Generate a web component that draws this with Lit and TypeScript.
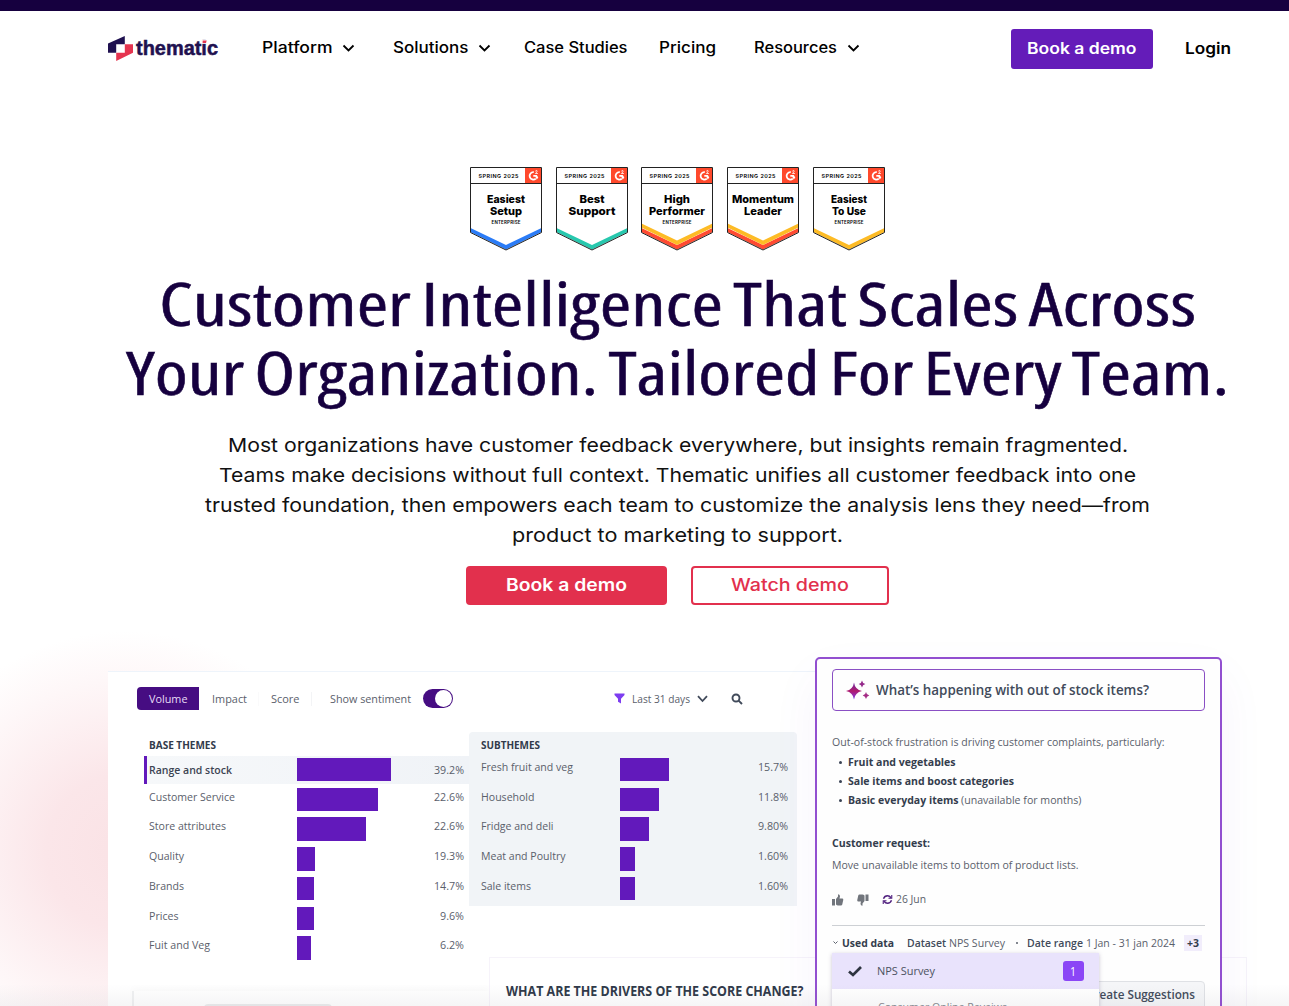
import { LitElement, html, svg, css, nothing } from "lit";
import { customElement, property } from "lit/decorators.js";

// one line of text set to an exact measure, caps centred in the box
@customElement("fit-text")
export class FitText extends LitElement {
  static styles = css`
    :host {
      display: block;
      flex: none;
    }

    svg {
      display: block;
      height: 1.28em;
      overflow: visible;
    }

    text {
      fill: currentColor;
      white-space: pre;
    }
  `;

  @property() text = "";
  @property({ type: Number }) w = 0;

  render() {
    return html`<svg width=${this.w}>
      <text x="0" y="1em" textLength=${this.w} lengthAdjust="spacingAndGlyphs">${this.text}</text>
    </svg>`;
  }
}

const fit = (text: string, w: number, cls = "") =>
  html`<fit-text class=${cls} .text=${text} .w=${w}></fit-text>`;

interface Badge {
  lines: [string, number][];
  small?: boolean;
  size: number;
  colors: string[];
}

const badges: Badge[] = [
  { lines: [["Easiest", 38], ["Setup", 32]], small: true, size: 11, colors: ["#2b7cf7"] },
  { lines: [["Best", 25], ["Support", 47]], size: 11, colors: ["#27c8ae"] },
  { lines: [["High", 26], ["Performer", 56]], small: true, size: 11, colors: ["#ff4a31", "#fdbb25"] },
  { lines: [["Momentum", 62], ["Leader", 38]], size: 11, colors: ["#ff4a31", "#fdbb25"] },
  { lines: [["Easiest", 36], ["To Use", 34]], small: true, size: 10.4, colors: ["#fdbb25"] },
];

@customElement("award-badge")
export class AwardBadge extends LitElement {
  static styles = css`
    :host {
      display: block;
    }

    svg {
      display: block;
      overflow: visible;
    }

    text {
      font-family: Inter, sans-serif;
      text-anchor: middle;
      fill: #000;
    }

    .season {
      font-size: 5.4px;
      font-weight: 600;
    }

    .title {
      font-weight: 800;
    }

    .tier {
      font-size: 4.4px;
      font-weight: 600;
    }
  `;

  @property({ attribute: false }) badge!: Badge;

  render() {
    const b = this.badge;
    return html`<svg width="72" height="85" viewBox="0 0 72 85">
      <path d="M.5 .5H71.5V65.5L36 83 .5 65.5Z" fill="#fff" />
      ${b.colors.map((c, i) => {
        const y = 65 - i * 4.5;
        return svg`<path d=${`M.5 ${y - 4}L36 ${y + 13}L71.5 ${y - 4}V${y}L36 ${y + 17.5}L.5 ${y}Z`} fill=${c} />`;
      })}
      <path d="M.5 .5H71.5V65.5L36 83 .5 65.5Z" fill="none" stroke="#222" />
      <path d="M.5 16.5H71.5" stroke="#222" />
      <rect x="55" y="1" width="16" height="15" fill="#ff492c" />
      <path d="M63.8 5.200A3.700 3.700 0 1 0 65.800 11.600" fill="none" stroke="#fff" stroke-width="1.800" />
      <path d="M65.300 4.300Q66 3.100 67 3.700Q67.800 4.600 65.400 6.500H67.900" fill="none" stroke="#fff" stroke-width=".8" />
      <path d="M63.300 8.100H66.800L68.300 10.600L66.800 12.400L65.300 9.800H63.300Z" fill="#fff" />
      <text class="season" x="28.5" y="10.5" textLength="40">SPRING 2025</text>
      ${b.lines.map(
        ([t, w], i) => svg`<text class="title" x="36" y=${36 + i * 12} font-size=${b.size}
          textLength=${w} lengthAdjust="spacingAndGlyphs">${t}</text>`
      )}
      ${b.small ? svg`<text class="tier" x="36" y="57" textLength="29">ENTERPRISE</text>` : nothing}
    </svg>`;
  }
}

type Row = [label: string, labelWidth: number, bar: number, pct: string, pctWidth: number];

const baseThemes: Row[] = [
  ["Range and stock", 83, 93.5, "39.2%", 30],
  ["Customer Service", 86, 80.5, "22.6%", 30],
  ["Store attributes", 77, 69, "22.6%", 30],
  ["Quality", 35, 18, "19.3%", 30],
  ["Brands", 35, 16.5, "14.7%", 30],
  ["Prices", 29.5, 16.5, "9.6%", 24],
  ["Fuit and Veg", 61, 14, "6.2%", 24],
];

const subThemes: Row[] = [
  ["Fresh fruit and veg", 92, 49, "15.7%", 30],
  ["Household", 53.5, 39, "11.8%", 30],
  ["Fridge and deli", 72.5, 28.5, "9.80%", 30],
  ["Meat and Poultry", 84.5, 15, "1.60%", 30],
  ["Sale items", 50, 15, "1.60%", 30],
];

@customElement("theme-table")
export class ThemeTable extends LitElement {
  static styles = css`
    :host {
      display: block;
      box-sizing: border-box;
      color: #5a606b;
    }

    .heading {
      padding-top: 5.6px;
      height: 20px;
      font-size: 11.2px;
      font-weight: 700;
      color: #323b4b;
    }

    .row {
      display: grid;
      grid-template-columns: var(--label) 1fr auto;
      align-items: start;
      height: 29.75px;
    }

    .row fit-text {
      margin-top: 2.2px;
    }

    .bar {
      height: 23.6px;
      background: #6219bb;
    }

    .selected {
      height: 28px;
      box-sizing: border-box;
      margin: -1.6px -5px 3.35px -5px;
      padding: 1.6px 5px 0 2px;
      border-left: 3px solid #6219bb;
      background: linear-gradient(90deg, #f6f8fa, #f0f3f7);
    }

    .selected fit-text {
      margin-top: 5.4px;
    }

    .selected .label {
      font-weight: 600;
      color: #3c4453;
    }
  `;

  @property() heading = "";
  @property({ type: Number }) headingWidth = 0;
  @property({ attribute: false }) rows: Row[] = [];
  @property({ type: Number }) selected = -1;

  render() {
    return html`
      <div class="heading">${fit(this.heading, this.headingWidth)}</div>
      ${this.rows.map(
        ([label, lw, bar, pct, pw], i) => html`<div class="row ${i === this.selected ? "selected" : ""}">
          ${fit(label, lw, "label")}
          <div class="bar" style="width:${bar}px"></div>
          ${fit(pct, pw)}
        </div>`
      )}
    `;
  }
}

@customElement("insight-card")
export class InsightCard extends LitElement {
  static styles = css`
    :host {
      display: block;
      box-sizing: border-box;
      border: 2px solid #924fd0;
      border-radius: 5px;
      background: #fefefe;
      padding: 10px 15px 0;
      box-shadow: 0 20px 50px rgba(98, 25, 187, 0.05);
      font-size: 11.2px;
      color: #5a606b;
    }

    svg {
      display: block;
      flex: none;
    }

    .question {
      display: flex;
      align-items: center;
      gap: 5.5px;
      box-sizing: border-box;
      height: 41.5px;
      padding-left: 12px;
      border: 1.5px solid #8a4fc4;
      border-radius: 4px;
      color: #414a5a;
      font-size: 14.4px;
      font-weight: 600;
    }

    .summary {
      margin-top: 24.8px;
    }

    ul {
      list-style: none;
      margin: 4.7px 0 0;
      padding: 0 0 0 7px;
    }

    li {
      display: flex;
      height: 19.1px;
      gap: 2.5px;
    }

    li::before {
      content: "";
      width: 3px;
      height: 3px;
      margin: 6px 3px 0 0;
      border-radius: 50%;
      background: #3a4354;
    }

    .strong {
      font-weight: 700;
      color: #343d4d;
    }

    .semi {
      font-weight: 600;
      color: #414a5a;
    }

    .request {
      margin-top: 24px;
    }

    .action {
      margin-top: 7.7px;
    }

    .feedback {
      display: flex;
      align-items: center;
      height: 14px;
      margin-top: 20.5px;
      padding-bottom: 18.2px;
      border-bottom: 1px solid #cdd0d4;
    }

    .feedback svg + svg {
      margin-left: 13.5px;
    }

    .feedback fit-text {
      margin-left: 3px;
    }

    .used {
      display: flex;
      align-items: center;
      height: 20px;
      margin-top: 7px;
      gap: 3px;
    }

    .used .dataset {
      margin-left: 10px;
    }

    .used .range {
      margin-left: 6px;
    }

    .dot {
      width: 2px;
      height: 2px;
      margin-left: 8px;
      border-radius: 50%;
      background: #5a606b;
    }

    .more {
      margin-left: 6px;
      padding: 1px 3px;
      background: #f1edfb;
    }

    .create {
      display: flex;
      box-sizing: border-box;
      width: 136px;
      height: 30px;
      margin: 28px 0 0 auto;
      padding: 5px 0 0 16.5px;
      border: 1px solid #dfe1e5;
      border-radius: 4px;
      background: #f5f6f8;
      color: #414a5a;
      font-weight: 600;
      font-size: 12px;
    }

    /* dataset menu opened over the lower part of the card */
    .menu {
      position: absolute;
      top: 294px;
      left: 14.5px;
      width: 267px;
      height: 70px;
      background: #fff;
      box-shadow: 0 1px 4px rgba(40, 20, 80, 0.25);
    }

    .option {
      display: flex;
      align-items: center;
      box-sizing: border-box;
      height: 36px;
      padding: 0 15px 0 16.5px;
      background: #e9e3fc;
      color: #4b5260;
    }

    .option fit-text {
      margin-left: 15px;
    }

    .count {
      display: grid;
      place-items: center;
      width: 20.5px;
      height: 19.5px;
      margin-left: auto;
      border-radius: 3px;
      background: #8b46f6;
      color: #fff;
      font-size: 12px;
    }

    .count fit-text {
      margin: 0;
    }

    .next {
      padding: 11px 0 0 46px;
      color: #85898f;
    }
  `;

  render() {
    return html`
      <div class="question">
        <svg width="25" height="20" viewBox="0 0 25 20">
          <defs>
            <linearGradient id="spark" x1="0" y1="0" x2="0" y2="1">
              <stop offset=".1" stop-color="#7a2a9a" />
              <stop offset=".5" stop-color="#b01a6c" />
              <stop offset="1" stop-color="#7d3df0" />
            </linearGradient>
          </defs>
          <path d="M9 2.500Q10 9.500 17 11Q10 12.500 9 19.500Q8 12.500 1 11Q8 9.500 9 2.500Z" fill="url(#spark)" />
          <path d="M17 .5Q17.500 3.500 20.300 4Q17.500 4.500 17 7.500Q16.500 4.500 13.700 4Q16.500 3.500 17 .5Z" fill="#94288a" />
          <path d="M21 12Q21.500 15 24.300 15.500Q21.500 16 21 19Q20.500 16 17.700 15.500Q20.500 15 21 12Z" fill="#a52d86" />
        </svg>
        ${fit("What’s happening with out of stock items?", 273)}
      </div>
      ${fit("Out-of-stock frustration is driving customer complaints, particularly:", 332.5, "summary")}
      <ul>
        <li>${fit("Fruit and vegetables", 107.5, "strong")}</li>
        <li>${fit("Sale items and boost categories", 166, "strong")}</li>
        <li>${fit("Basic everyday items", 110.5, "strong")}${fit("(unavailable for months)", 120.5)}</li>
      </ul>
      ${fit("Customer request:", 98, "strong request")}
      ${fit("Move unavailable items to bottom of product lists.", 246.5, "action")}
      <div class="feedback">
        <svg width="11.500" height="12" viewBox="0 0 23 24" fill="#71757c">
          <path d="M0 10H6V23H0ZM8 10L12 5V1.500Q12 .5 13 .5Q16 1 16 5L15 9H21Q23 9.500 22.500 12L20.500 21Q20 23 18 23H12Q10 23 8 21Z" />
        </svg>
        <svg width="11.500" height="12" viewBox="0 0 23 24" fill="#71757c">
          <path transform="rotate(180 11.500 12)" d="M0 10H6V23H0ZM8 10L12 5V1.500Q12 .5 13 .5Q16 1 16 5L15 9H21Q23 9.500 22.500 12L20.500 21Q20 23 18 23H12Q10 23 8 21Z" />
        </svg>
        <svg width="11" height="11" viewBox="0 0 22 22" fill="none" stroke="#51217f" stroke-width="2.800">
          <path d="M3 9.500Q5 3.500 11 3.500Q15 3.500 18 7.500M19 12.500Q17 18.500 11 18.500Q7 18.500 4 14.500" />
          <path d="M19.500 2V8.500H13M2.500 20V13.500H9" stroke-width="2.200" />
        </svg>
        ${fit("26 Jun", 30)}
      </div>
      <div class="used">
        <svg width="7" height="6" viewBox="0 0 7 6" fill="none" stroke="#5a606b">
          <path d="M1.500 1.500L3.500 3.500L5.500 1.500" />
        </svg>
        ${fit("Used data", 52, "strong")}
        ${fit("Dataset", 39, "semi dataset")}
        ${fit("NPS Survey", 56)}
        <span class="dot"></span>
        ${fit("Date range", 56, "semi range")}
        ${fit("1 Jan - 31 jan 2024", 89)}
        ${fit("+3", 12, "strong more")}
      </div>
      <div class="create">${fit("Create Suggestions", 108)}</div>
      <div class="menu">
        <div class="option">
          <svg width="14" height="11" viewBox="0 0 14 11" fill="none" stroke="#2e3440" stroke-width="2.700">
            <path d="M1 5.500L5 9L13 1" />
          </svg>
          ${fit("NPS Survey", 58)}
          <span class="count">${fit("1", 6)}</span>
        </div>
        <div class="next">${fit("Consumer Online Reveiws", 129)}</div>
      </div>
    `;
  }
}

@customElement("app-root")
export class AppRoot extends LitElement {
  static styles = css`
    :host {
      display: flex;
      flex-direction: column;
      height: 1006px;
      overflow: hidden;
      background: #fff;
      border-top: 11px solid #16003f;
      box-sizing: border-box;
      font-family: Inter, sans-serif;
      color: #000;
    }

    svg {
      display: block;
      flex: none;
    }

    header {
      display: flex;
      align-items: center;
      flex: none;
      height: 75px;
      padding: 0 58px 0 108px;
      font-size: 15.4px;
      font-weight: 500;
    }

    .logo {
      overflow: visible;
    }

    .logo text {
      font-family: "Liberation Sans", sans-serif;
      font-weight: 700;
      font-size: 20px;
      fill: #1f1150;
      stroke: #1f1150;
      stroke-width: 0.5px;
    }

    nav {
      display: flex;
      align-items: center;
      margin: -1px 0 0 43.5px;
    }

    .item {
      display: flex;
      align-items: center;
      gap: 10px;
      margin-right: 32.4px;
    }

    .item.wide {
      margin-right: 37.7px;
    }

    .book {
      display: grid;
      place-items: center;
      width: 142px;
      height: 40px;
      margin: 1px 32px 0 auto;
      border-radius: 3px;
      background: #641cb9;
      color: #fff;
      font-weight: 600;
    }

    .login {
      font-weight: 600;
      margin-top: 1px;
    }

    .hero {
      display: flex;
      flex-direction: column;
      align-items: center;
      flex: none;
      padding: 81px 42px 0 108px;
    }

    .badges {
      display: flex;
      gap: 13.7px;
      height: 84px;
      margin-right: 0.6px;
    }

    h1 {
      display: flex;
      flex-direction: column;
      align-items: center;
      margin: 15px 0 0;
      font-family: "Open Sans", sans-serif;
      font-size: 60px;
      font-weight: 400;
      font-stretch: 84%;
      word-spacing: -3px;
      color: #16003f;
      stroke: #16003f;
      stroke-width: 0.5px;
    }

    h1 fit-text {
      height: 69px;
    }

    .lead {
      display: flex;
      flex-direction: column;
      align-items: center;
      margin: 29px 0 0;
      font-size: 19.3px;
      color: #111;
    }

    .lead fit-text {
      height: 30px;
    }

    .actions {
      display: flex;
      gap: 24px;
      margin-top: 13.2px;
      font-size: 17.3px;
      font-weight: 500;
    }

    .primary,
    .outline {
      display: grid;
      place-items: center;
      box-sizing: border-box;
      width: 201px;
      height: 39px;
      border-radius: 4px;
      background: #e2304d;
      color: #fff;
      font-weight: 600;
      padding-bottom: 1px;
    }

    .outline {
      width: 198px;
      border: 2px solid #e2304d;
      background: #fff;
      color: #e2304d;
      font-weight: 500;
    }

    .stage {
      position: relative;
      flex: 1;
      margin-top: 26px;
      padding: 40px 0 0 108px;
      overflow: hidden;
      background: radial-gradient(ellipse 225px 220px at 125px 220px, #fae2e5 0, #fbe6e9 35%, #fef7f8 78%, #fff 100%);
      font-family: "Open Sans", sans-serif;
      font-size: 11.2px;
      color: #5a606b;
    }

    .panel {
      box-sizing: border-box;
      width: 1110px;
      height: 400px;
      padding: 15px 0 0 24px;
      border-top: 1px solid #eef4fb;
      background: #fff;
    }

    .toolbar {
      display: flex;
      align-items: center;
      height: 23px;
      padding-left: 5px;
    }

    .tab {
      display: flex;
      align-items: center;
      box-sizing: border-box;
      width: 62px;
      height: 23px;
      padding-left: 12px;
      border-radius: 4px 0 0 4px;
      background: #460d82;
      color: #e8dcf5;
    }

    .impact {
      margin-left: 12.5px;
    }

    .score {
      margin-left: 11px;
      padding: 0 12px;
      border-left: 1px solid #fafafb;
      border-right: 1px solid #f3f4f6;
    }

    .sentiment {
      margin: 0 12px 0 18px;
    }

    .toggle {
      display: flex;
      justify-content: flex-end;
      box-sizing: border-box;
      width: 30px;
      height: 19px;
      padding: 1px;
      border-radius: 10px;
      background: #460d82;
    }

    .toggle::after {
      content: "";
      width: 17px;
      height: 17px;
      border-radius: 50%;
      background: #fff;
    }

    .period {
      display: flex;
      align-items: center;
      gap: 7px;
      margin-left: 160.7px;
    }

    .search {
      margin-left: 23px;
    }

    .tables {
      display: flex;
      align-items: flex-start;
      margin-top: 22px;
      padding-left: 12px;
    }

    .tables theme-table {
      width: 325px;
      padding: 0 5px;
      --label: 148px;
    }

    .tables .sub {
      width: 328px;
      height: 174px;
      padding: 0 9.5px 0 12px;
      border-radius: 4px 4px 0 0;
      background: #f1f4f7;
      --label: 139px;
    }

    /* next cards, peeking in at the fold */
    .below {
      display: flex;
      align-items: flex-start;
      margin-top: -9px;
    }

    .mini {
      box-sizing: border-box;
      flex: none;
      width: 357px;
      height: 40px;
      margin-top: 34px;
      padding: 13px 0 0 70px;
      border-left: 2px solid #f0f1f2;
      box-shadow: 0 -4px 6px rgba(0, 0, 0, 0.015);
    }

    .mini span {
      display: block;
      width: 128px;
      height: 10px;
      border-radius: 4px;
      background: #ebeced;
    }

    .drivers {
      box-sizing: border-box;
      flex: none;
      width: 758px;
      height: 60px;
      padding: 23.5px 0 0 16px;
      border: 1px solid #f6f3fa;
      background: #fff;
      color: #2f3949;
      font-size: 13.5px;
      font-weight: 700;
    }

    insight-card {
      position: absolute;
      left: 815px;
      top: 26px;
      width: 407px;
      height: 400px;
    }

    .fade {
      position: absolute;
      left: 0;
      right: 0;
      bottom: 0;
      height: 22px;
      background: linear-gradient(rgba(120, 120, 130, 0), rgba(120, 120, 130, 0.07));
    }
  `;

  private navItem(label: string, w: number, menu: boolean, wide = false) {
    return html`<div class="item ${wide ? "wide" : ""}">
      ${fit(label, w)}
      ${menu
        ? html`<svg width="13" height="8" viewBox="0 0 13 8" fill="none" stroke="#000" stroke-width="1.800">
            <path d="M1.500 1.500L6.500 6.500L11.500 1.500" />
          </svg>`
        : nothing}
    </div>`;
  }

  render() {
    return html`
      <header>
        <svg class="logo" width="110" height="25" viewBox="0 0 110 25">
          <path d="M0 7.400L16.800 0V8.200H8.200V16.800H0Z" fill="#1f1150" />
          <path d="M16.800 8.200H25V16.800L8.200 25V16.800H16.800Z" fill="#e5344f" />
          <text x="28" y="19" textLength="82" lengthAdjust="spacingAndGlyphs">thematic</text>
          <path d="M93.800 3.500H99V7.400H93.800Z" fill="#fff" />
          <path d="M94.600 4.500H98.700L98 7H94.600Z" fill="#e5344f" />
        </svg>
        <nav>
          ${this.navItem("Platform", 70.5, true, true)}
          ${this.navItem("Solutions", 75.5, true)}
          ${this.navItem("Case Studies", 103.5, false)}
          ${this.navItem("Pricing", 57, false, true)}
          ${this.navItem("Resources", 83, true)}
        </nav>
        <div class="book">${fit("Book a demo", 109.5)}</div>
        ${fit("Login", 46, "login")}
      </header>

      <section class="hero">
        <div class="badges">${badges.map((b) => html`<award-badge .badge=${b}></award-badge>`)}</div>
        <h1>
          ${fit("Customer Intelligence That Scales Across", 1037)}
          ${fit("Your Organization. Tailored For Every Team.", 1103)}
        </h1>
        <div class="lead">
          ${fit("Most organizations have customer feedback everywhere, but insights remain fragmented.", 900)}
          ${fit("Teams make decisions without full context. Thematic unifies all customer feedback into one", 917)}
          ${fit("trusted foundation, then empowers each team to customize the analysis lens they need—from", 945)}
          ${fit("product to marketing to support.", 331)}
        </div>
        <div class="actions">
          <div class="primary">${fit("Book a demo", 121)}</div>
          <div class="outline">${fit("Watch demo", 118)}</div>
        </div>
      </section>

      <section class="stage">
        <div class="panel">
          <div class="toolbar">
            <div class="tab">${fit("Volume", 38.5)}</div>
            ${fit("Impact", 35, "impact")}
            ${fit("Score", 28.5, "score")}
            ${fit("Show sentiment", 81, "sentiment")}
            <div class="toggle"></div>
            <div class="period">
              <svg width="11" height="11" viewBox="0 0 11 11" fill="#7d3df0">
                <path d="M.5 .5H10.500V2L7 5.800V10.500L4 8.800V5.800L.5 2Z" />
              </svg>
              ${fit("Last 31 days", 58)}
              <svg width="11" height="8" viewBox="0 0 11 8" fill="none" stroke="#414a5a" stroke-width="1.800">
                <path d="M1 1.200L5.500 6L10 1.200" />
              </svg>
            </div>
            <svg class="search" width="12" height="12" viewBox="0 0 12 12" fill="none" stroke="#414a5a" stroke-width="1.900">
              <circle cx="5" cy="5" r="3.500" />
              <path d="M7.600 7.600L11 11" />
            </svg>
          </div>
          <div class="tables">
            <theme-table heading="BASE THEMES" .headingWidth=${67} .rows=${baseThemes} .selected=${0}></theme-table>
            <theme-table class="sub" heading="SUBTHEMES" .headingWidth=${59} .rows=${subThemes}></theme-table>
          </div>
          <div class="below">
            <div class="mini"><span></span></div>
            <div class="drivers">${fit("WHAT ARE THE DRIVERS OF THE SCORE CHANGE?", 297.5)}</div>
          </div>
        </div>
        <insight-card></insight-card>
        <div class="fade"></div>
      </section>
    `;
  }
}
